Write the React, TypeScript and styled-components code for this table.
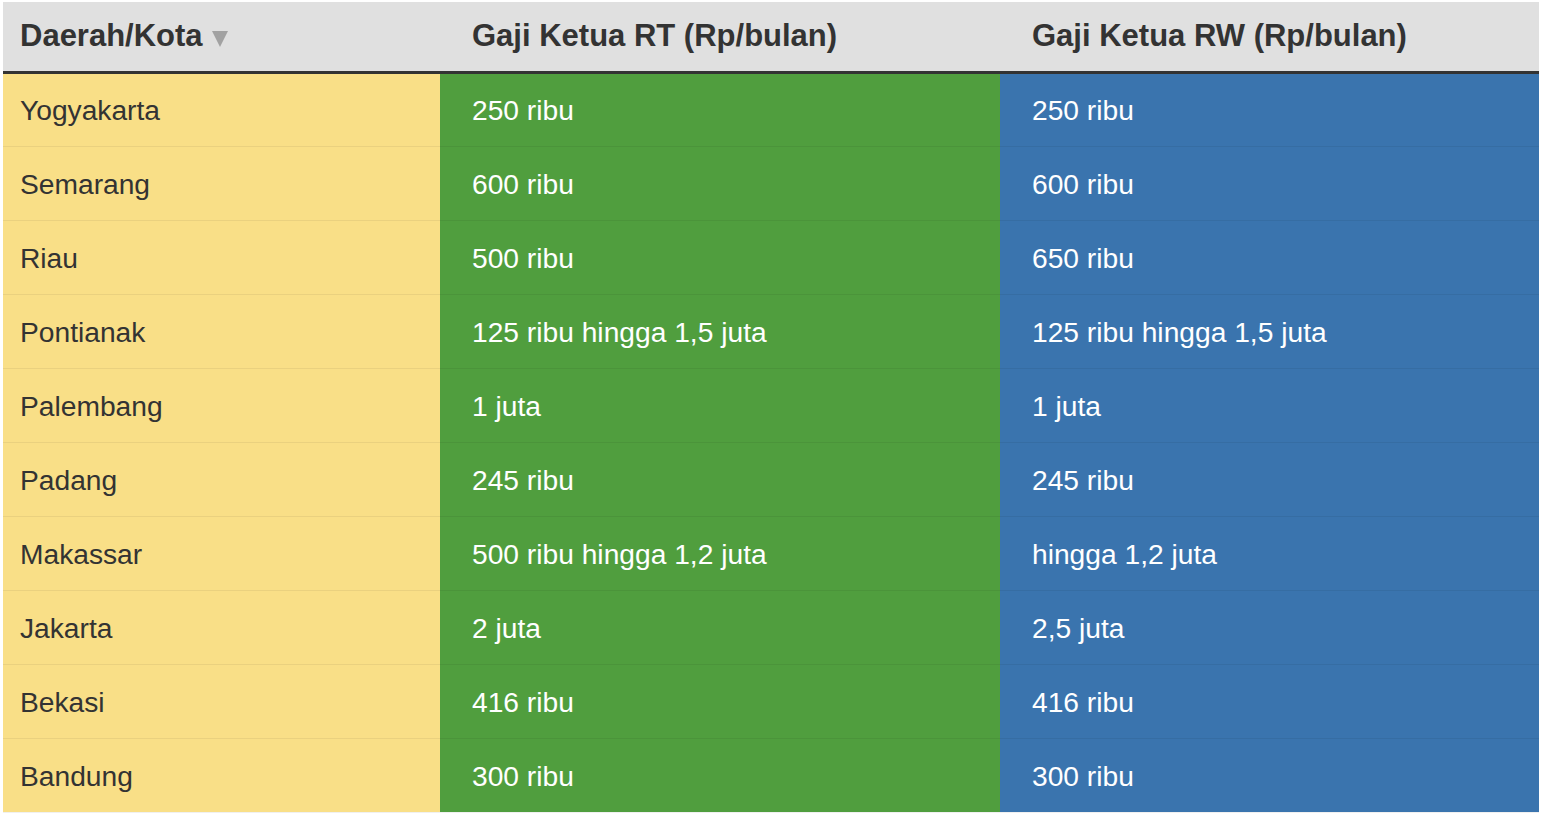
import React from "react";
import styled, { createGlobalStyle } from "styled-components";

const Global = createGlobalStyle`
  html, body { margin: 0; padding: 0; background: #ffffff; }
  body { font-family: "Liberation Sans", Arial, Helvetica, sans-serif; }
`;

const Wrap = styled.div`
  padding: 2px 5px 0 3px;
`;

const Table = styled.table`
  width: 1536px;
  border-collapse: collapse;
  table-layout: fixed;
`;

const HeadCell = styled.th<{ $pad: number }>`
  background: #e0e0e0;
  color: #333333;
  font-weight: 700;
  font-size: 31px;
  text-align: left;
  height: 70px;
  padding: 0 0 0 ${(p) => p.$pad}px;
  border-bottom: 3px solid #333333;
  box-sizing: border-box;
  white-space: nowrap;
`;

const SortArrow = styled.span`
  display: inline-block;
  margin-left: 9px;
  width: 0;
  height: 0;
  border-left: 8px solid transparent;
  border-right: 8px solid transparent;
  border-top: 16px solid #a2a2a2;
  vertical-align: -1px;
`;

const Cell = styled.td<{ $bg: string; $fg: string; $pad: number }>`
  background: ${(p) => p.$bg};
  color: ${(p) => p.$fg};
  font-size: 28.2px;
  height: 74px;
  padding: 2px 0 0 ${(p) => p.$pad}px;
  box-sizing: border-box;
  border-bottom: 1px solid rgba(0, 0, 0, 0.06);
  white-space: nowrap;
`;

const rows: [string, string, string][] = [
  ["Yogyakarta", "250 ribu", "250 ribu"],
  ["Semarang", "600 ribu", "600 ribu"],
  ["Riau", "500 ribu", "650 ribu"],
  ["Pontianak", "125 ribu hingga 1,5 juta", "125 ribu hingga 1,5 juta"],
  ["Palembang", "1 juta", "1 juta"],
  ["Padang", "245 ribu", "245 ribu"],
  ["Makassar", "500 ribu hingga 1,2 juta", "hingga 1,2 juta"],
  ["Jakarta", "2 juta", "2,5 juta"],
  ["Bekasi", "416 ribu", "416 ribu"],
  ["Bandung", "300 ribu", "300 ribu"],
];

export default function App() {
  return (
    <>
      <Global />
      <Wrap>
        <Table>
          <colgroup>
            <col style={{ width: 437 }} />
            <col style={{ width: 560 }} />
            <col style={{ width: 539 }} />
          </colgroup>
          <thead>
            <tr>
              <HeadCell $pad={17}>
                Daerah/Kota
                <SortArrow />
              </HeadCell>
              <HeadCell $pad={32}>Gaji Ketua RT (Rp/bulan)</HeadCell>
              <HeadCell $pad={32}>Gaji Ketua RW (Rp/bulan)</HeadCell>
            </tr>
          </thead>
          <tbody>
            {rows.map(([city, rt, rw]) => (
              <tr key={city}>
                <Cell $bg="#f9df87" $fg="#333333" $pad={17}>
                  {city}
                </Cell>
                <Cell $bg="#509e3e" $fg="#ffffff" $pad={32}>
                  {rt}
                </Cell>
                <Cell $bg="#3a74ae" $fg="#ffffff" $pad={32}>
                  {rw}
                </Cell>
              </tr>
            ))}
          </tbody>
        </Table>
      </Wrap>
    </>
  );
}
